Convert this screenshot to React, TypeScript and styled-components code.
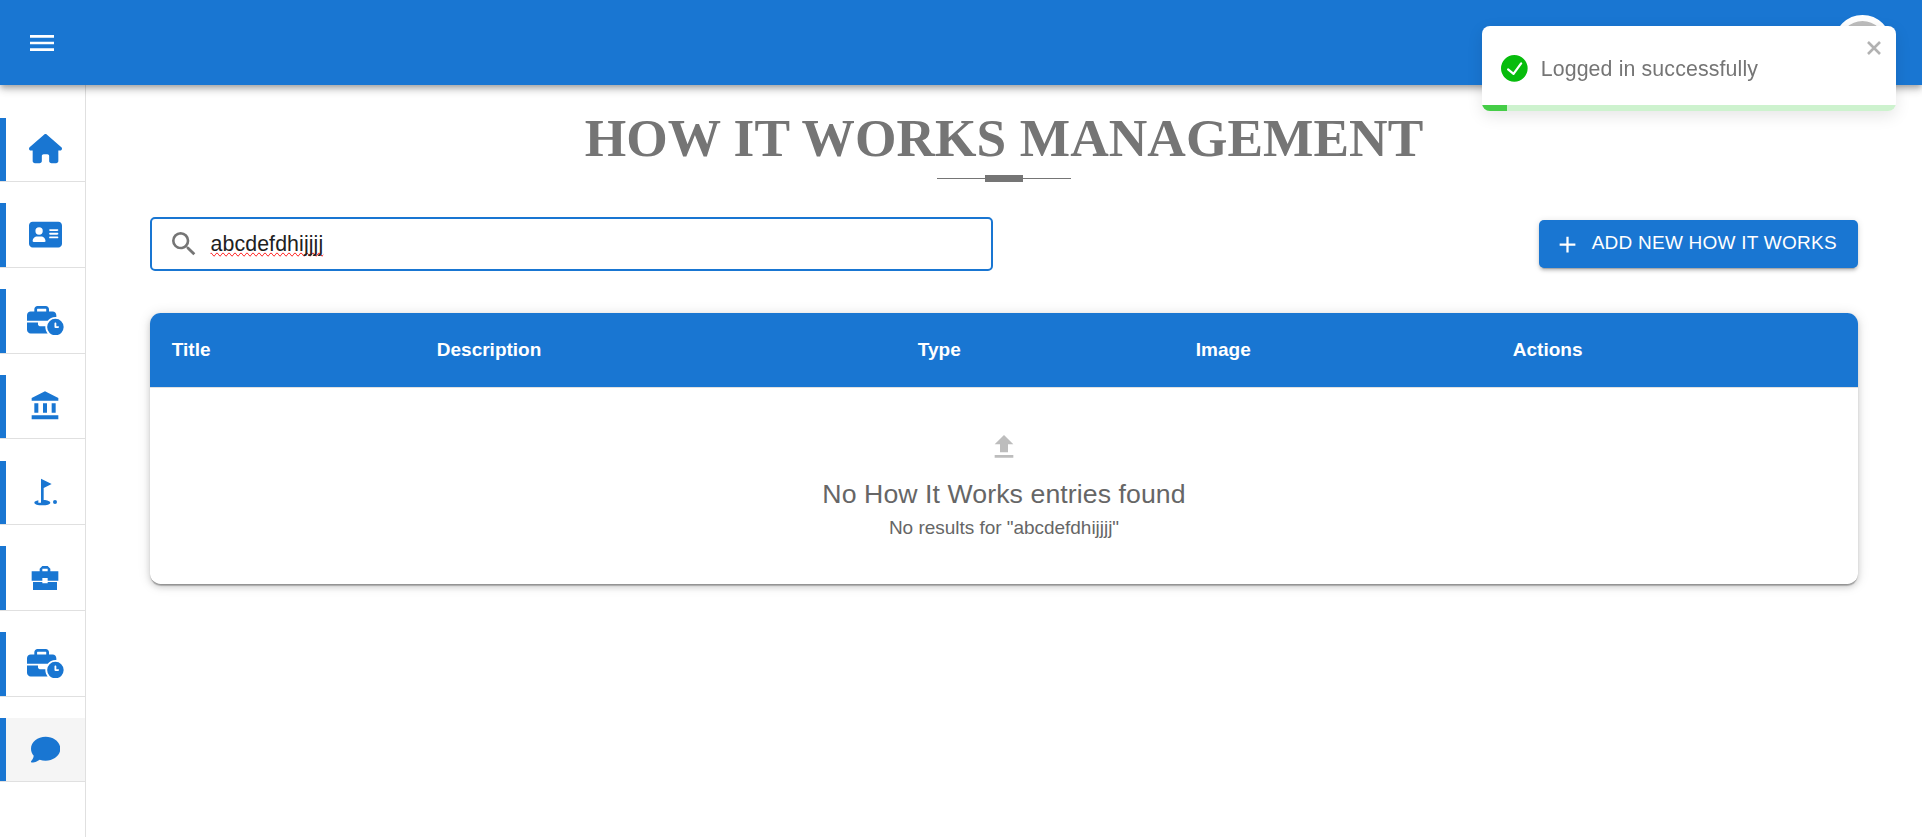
import React from "react";
import styled, { createGlobalStyle } from "styled-components";
import { FaHouse, FaAddressCard, FaBusinessTime, FaComment } from "react-icons/fa6";
import { MdMenu, MdSearch, MdAdd, MdGolfCourse } from "react-icons/md";

const BLUE = "#1976d2";

const GlobalStyle = createGlobalStyle`
  * { box-sizing: border-box; }
  body {
    margin: 0;
    background: #fff;
    font-family: "Liberation Sans", Arial, sans-serif;
    overflow: hidden;
  }
`;

const Page = styled.div`
  display: flex;
  flex-direction: column;
  height: 837px;
`;

const TopBar = styled.header`
  position: relative;
  z-index: 2;
  flex: none;
  display: flex;
  align-items: center;
  justify-content: space-between;
  height: 85px;
  padding: 0 31px 0 26.4px;
  background: ${BLUE};
  color: #fff;
  box-shadow: 0 3px 5px -1px rgba(0, 0, 0, 0.2), 0 5px 7px rgba(0, 0, 0, 0.14),
    0 1px 13px rgba(0, 0, 0, 0.12);
`;

const Avatar = styled.div`
  width: 57px;
  height: 57px;
  margin-top: 2px;
  border: 6px solid #fff;
  border-radius: 50%;
  background: #bdbdbd;
`;

const Body = styled.div`
  flex: 1;
  display: flex;
  min-height: 0;
`;

const Sidebar = styled.nav`
  flex: none;
  display: flex;
  flex-direction: column;
  gap: 21.05px;
  width: 86px;
  padding-top: 32.6px;
  border-right: 1px solid #e0e0e0;
`;

const NavItem = styled.a<{ $active?: boolean }>`
  flex: none;
  display: flex;
  align-items: center;
  justify-content: center;
  height: 64.7px;
  padding: 0 0 0.6px 5.6px;
  border-bottom: 1px solid #e0e0e0;
  background: ${(p) => (p.$active ? "#f5f5f5" : "#fff")};
  box-shadow: inset 6px 0 0 ${BLUE};
  color: ${BLUE};
`;

const NavIcon = styled.span<{ $width: number; $height?: number }>`
  display: flex;
  svg {
    width: ${(p) => p.$width}px;
    height: ${(p) => p.$height ?? 29.33}px;
  }
`;

const Main = styled.main`
  flex: 1;
  padding: 21px 64px 0;
`;

const Heading = styled.h1`
  margin: 0;
  font: 700 53.33px/64px "Liberation Serif", "Times New Roman", serif;
  letter-spacing: 0.07px;
  text-align: center;
  text-transform: uppercase;
  color: #757575;
`;

const Divider = styled.div`
  display: flex;
  align-items: center;
  width: 133.3px;
  height: 7px;
  margin: 5px auto 0;
`;

const Line = styled.span`
  flex: 1;
  height: 1px;
  background: #757575;
`;

const Block = styled.span`
  width: 37.3px;
  height: 7px;
  background: #757575;
`;

const Toolbar = styled.div`
  display: flex;
  align-items: center;
  justify-content: space-between;
  margin-top: 35px;
`;

const SearchBox = styled.label`
  display: flex;
  align-items: center;
  gap: 10.5px;
  width: 843px;
  height: 54px;
  padding: 0 16px;
  border: 2px solid ${BLUE};
  border-radius: 5px;
  color: #757575;
`;

const SearchText = styled.span`
  font-size: 21.33px;
  letter-spacing: 0.1px;
  color: #212121;
  text-decoration-line: spelling-error;
`;

const AddButton = styled.button`
  display: flex;
  align-items: center;
  gap: 10.3px;
  width: 319px;
  height: 48px;
  padding: 0 0 2px 15.4px;
  border: 0;
  border-radius: 5px;
  background: ${BLUE};
  color: #fff;
  font: 400 19px "Liberation Sans", Arial, sans-serif;
  letter-spacing: 0.24px;
  white-space: nowrap;
  box-shadow: 0 4px 1px -3px rgba(0, 0, 0, 0.2), 0 3px 3px rgba(0, 0, 0, 0.14),
    0 1px 7px rgba(0, 0, 0, 0.12);
  svg { position: relative; top: 1px; }
`;

const Table = styled.section`
  height: 271px;
  margin-top: 42px;
  overflow: hidden;
  border-radius: 10.67px;
  background: #fff;
  box-shadow: 0 3px 1px -1px rgba(0, 0, 0, 0.2), 0 1px 1px rgba(0, 0, 0, 0.14),
    0 3px 6px rgba(0, 0, 0, 0.14), 0 1px 13px rgba(0, 0, 0, 0.12);
`;

const HeadRow = styled.div`
  display: grid;
  grid-template-columns: 265px 481px 278px 317px 1fr;
  height: 75px;
  border-bottom: 1px solid #e0e0e0;
  background: ${BLUE};
  background-clip: padding-box;
`;

const HeadCell = styled.div`
  display: flex;
  align-items: center;
  padding: 0 21.8px 1px;
  color: #fff;
  font-size: 19px;
  font-weight: 700;
`;

const Empty = styled.div`
  display: flex;
  flex-direction: column;
  align-items: center;
  padding-top: 43px;
  color: #666;
`;

const EmptyTitle = styled.div`
  margin-top: 10px;
  font-size: 26.67px;
  line-height: 43px;
  letter-spacing: 0.08px;
`;

const EmptyText = styled.div`
  font-size: 19px;
  line-height: 24px;
  letter-spacing: -0.03px;
`;

const Toast = styled.div`
  position: fixed;
  z-index: 5;
  top: 26px;
  right: 26px;
  display: flex;
  align-items: center;
  gap: 13px;
  width: 414px;
  height: 85px;
  padding: 0 19px;
  overflow: hidden;
  border-radius: 8px;
  background: #fff;
  color: #757575;
  box-shadow: 0 5px 16px rgba(0, 0, 0, 0.1);
`;

const ToastText = styled.span`
  padding-top: 2px;
  font-size: 21.33px;
  letter-spacing: 0.13px;
`;

const CloseIcon = styled.svg`
  position: absolute;
  top: 15px;
  right: 15px;
`;

const Progress = styled.div`
  position: absolute;
  left: 0;
  right: 0;
  bottom: 0;
  height: 6px;
  background: #cdf2ce;
`;

const ProgressFill = styled.div`
  width: 25px;
  height: 6px;
  background: #45cd47;
`;

const BankIcon = () => (
  <svg viewBox="0 0 24 24" fill="currentColor">
    <path d="M4 10h3v7H4zm6.5 0h3v7h-3zM2 19h20v3H2zm15-9h3v7h-3zm-5-9L2 6v2h20V6z" />
  </svg>
);

const BriefcaseIcon = () => (
  <svg viewBox="0 0 24 24" fill="currentColor">
    <path d="M10 16v-1H3v6h18v-6h-7v1zm12-9h-6V5l-2-2h-4L8 5v2H2v7h8v-2h4v2h8zm-8 0h-4V5h4z" />
  </svg>
);

const columns = ["Title", "Description", "Type", "Image", "Actions"];

const navItems = [
  { icon: <FaHouse />, width: 33 },
  { icon: <FaAddressCard />, width: 33 },
  { icon: <FaBusinessTime />, width: 36.67 },
  { icon: <BankIcon />, width: 32, height: 32 },
  { icon: <MdGolfCourse />, width: 32, height: 32 },
  { icon: <BriefcaseIcon />, width: 32, height: 32 },
  { icon: <FaBusinessTime />, width: 36.67 },
  { icon: <FaComment />, width: 29.33 },
];

export default function App() {
  return (
    <Page>
      <GlobalStyle />
      <TopBar>
        <MdMenu size={32} />
        <Avatar />
      </TopBar>
      <Body>
        <Sidebar>
          {navItems.map((item, i) => (
            <NavItem key={i} $active={i === navItems.length - 1}>
              <NavIcon $width={item.width} $height={item.height}>
                {item.icon}
              </NavIcon>
            </NavItem>
          ))}
        </Sidebar>
        <Main>
          <Heading>How It Works Management</Heading>
          <Divider>
            <Line />
            <Block />
            <Line />
          </Divider>
          <Toolbar>
            <SearchBox>
              <MdSearch size={32} />
              <SearchText>abcdefdhijjjj</SearchText>
            </SearchBox>
            <AddButton>
              <MdAdd size={27} />
              ADD NEW HOW IT WORKS
            </AddButton>
          </Toolbar>
          <Table>
            <HeadRow>
              {columns.map((c) => (
                <HeadCell key={c}>{c}</HeadCell>
              ))}
            </HeadRow>
            <Empty>
              <svg width="32" height="32" viewBox="0 0 24 24" fill="#bdbdbd">
                <path d="M9 16h6v-6h4l-7-7-7 7h4zm-4 2h14v2H5z" />
              </svg>
              <EmptyTitle>No How It Works entries found</EmptyTitle>
              <EmptyText>No results for "abcdefdhijjjj"</EmptyText>
            </Empty>
          </Table>
        </Main>
      </Body>
      <Toast>
        <svg width="26.67" height="26.67" viewBox="0 0 24 24" fill="#07bc0c">
          <path d="M12 0a12 12 0 1012 12A12.014 12.014 0 0012 0zm6.927 8.2l-6.845 9.289a1.011 1.011 0 01-1.43.188l-4.888-3.908a1 1 0 111.25-1.562l4.076 3.261 6.227-8.451a1 1 0 111.61 1.183z" />
        </svg>
        <ToastText>Logged in successfully</ToastText>
        <CloseIcon width="14" height="14" viewBox="0 0 14 14" stroke="#b2b2b2" strokeWidth="2.6">
          <path d="M1 1l12 12M13 1L1 13" />
        </CloseIcon>
        <Progress>
          <ProgressFill />
        </Progress>
      </Toast>
    </Page>
  );
}
